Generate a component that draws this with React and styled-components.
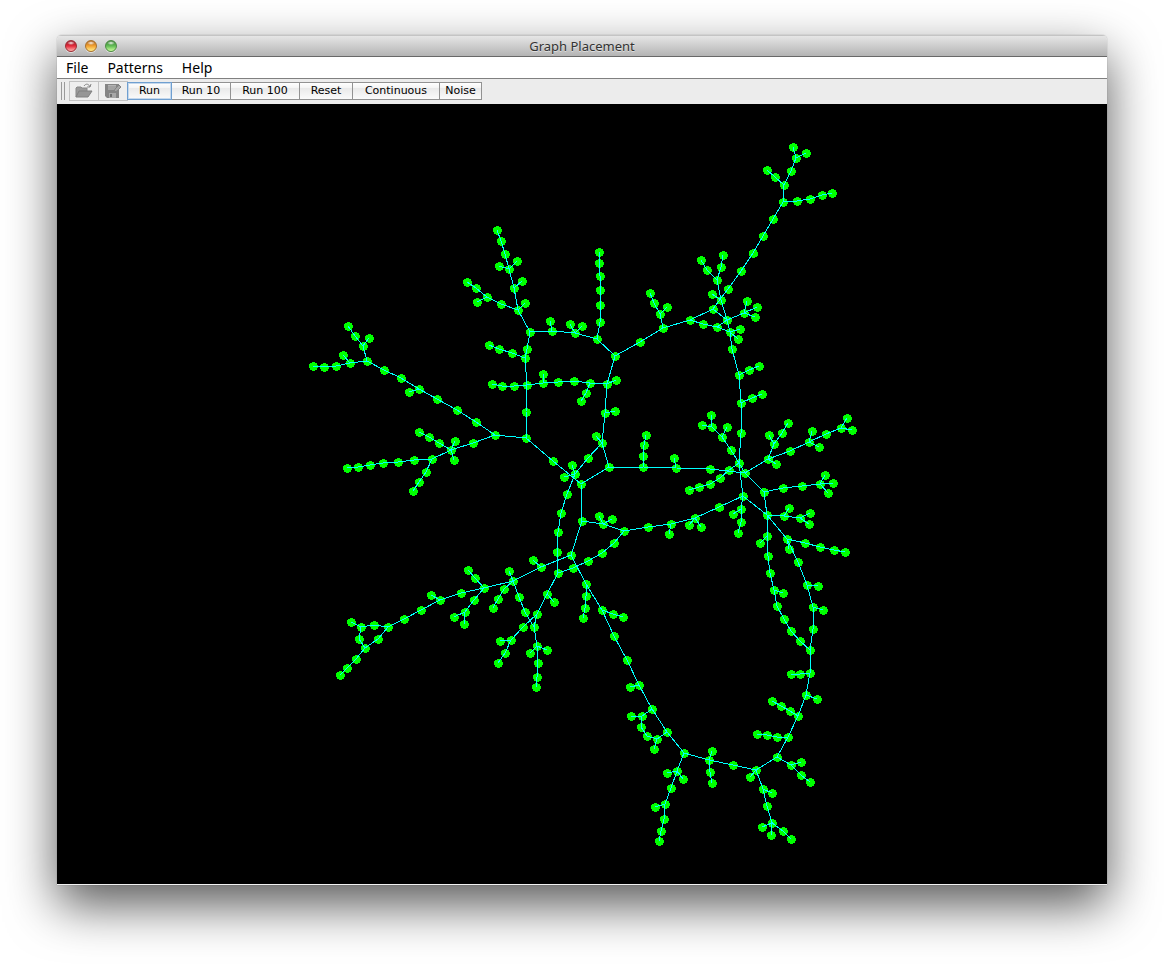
import React from "react";
import styled, { createGlobalStyle } from "styled-components";

const GlobalStyle = createGlobalStyle`
  *, *::before, *::after { box-sizing: border-box; }
  body {
    margin: 0;
    background: #ffffff;
    font-family: "Noto Sans", "Open Sans", sans-serif;
    color: #000000;
  }
`;

const Desktop = styled.main`
  padding: 35px 57px 79px;
`;

const Window = styled.section`
  overflow: hidden;
  border-radius: 5px 5px 0 0;
  background: #ececec;
`;

const WindowShadow = styled.div`
  border-radius: 5px 5px 0 0;
  box-shadow: 0 0 1px rgba(0, 0, 0, 0.5), 0 20px 50px rgba(0, 0, 0, 0.66);
`;

const TitleBar = styled.header`
  display: grid;
  grid-template-columns: 1fr auto 1fr;
  align-items: center;
  height: 22px;
  padding: 0 8px;
  border-top: 1px solid #c4c4c4;
  border-bottom: 1px solid #686868;
  background: linear-gradient(#e6e6e6, #b4b4b4);
`;

const Lights = styled.div`
  display: flex;
  gap: 8px;
`;

const LIGHTS = {
  close: { rim: "#9c2b33", top: "#8e1522", mid: "#e52b3c", low: "#ffb3ae" },
  minimize: { rim: "#a8702a", top: "#a9601c", mid: "#f3a231", low: "#fff08c" },
  zoom: { rim: "#4b8a42", top: "#3c7d36", mid: "#62bd55", low: "#ccff9e" },
};

const Light = styled.button`
  width: 12px;
  height: 12px;
  padding: 0;
  border: 1px solid ${(p) => LIGHTS[p.$kind].rim};
  border-radius: 50%;
  background:
    radial-gradient(ellipse 4px 2px at 50% 20%, rgba(255, 255, 255, 0.9), rgba(255, 255, 255, 0)),
    linear-gradient(
      ${(p) => LIGHTS[p.$kind].top},
      ${(p) => LIGHTS[p.$kind].mid} 50%,
      ${(p) => LIGHTS[p.$kind].low}
    );
  box-shadow: 0 1px 0 rgba(255, 255, 255, 0.5);
`;

const Title = styled.h1`
  margin: 0;
  font-size: 13px;
  line-height: 20px;
  font-weight: 400;
  color: #333333;
  text-shadow: 0 1px 0 rgba(255, 255, 255, 0.5);
`;

const MenuBar = styled.nav`
  display: flex;
  gap: 19px;
  height: 22px;
  padding: 0 9px;
  border-bottom: 1px solid #808080;
  background: #ffffff;
`;

const MenuItem = styled.button`
  padding: 0;
  border: 0;
  background: none;
  font: inherit;
  font-size: 14px;
  line-height: 21px;
  color: inherit;
`;

const ToolBar = styled.div`
  display: flex;
  align-items: center;
  height: 25px;
  padding: 0 0 1px 4px;
  background: #ececec;
`;

const Grip = styled.span`
  width: 4px;
  height: 18px;
  margin-right: 4px;
  border-left: 1px solid #9a9a9a;
  border-right: 1px solid #9a9a9a;
`;

const IconButton = styled.button`
  display: flex;
  align-items: center;
  justify-content: center;
  width: 30px;
  height: 20px;
  margin-right: -1px;
  padding: 0;
  border: 1px solid #c2c2c2;
  background: #eeeeee;
`;

const ToolButton = styled.button`
  width: ${(p) => p.$width}px;
  height: 18px;
  margin-right: -1px;
  padding: 0;
  border: 1px solid ${(p) => (p.$focused ? "#6f9fd0" : "#929292")};
  box-shadow: ${(p) => (p.$focused ? "inset 0 0 0 1px #c5d8ec" : "none")};
  position: relative;
  z-index: ${(p) => (p.$focused ? 1 : 0)};
  background: linear-gradient(#ffffff, #f4f4f4 30%, #e9e9e9 31%, #fafafa);
  font-family: "DejaVu Sans", sans-serif;
  font-size: 11px;
  line-height: 16px;
  color: #000000;
`;

const Canvas = styled.div`
  background: #000000;
  border-bottom: 1px solid #f2f2f2;
`;

const Graph = styled.svg`
  display: block;
  width: 100%;
  height: auto;
`;

const TOOLS = [
  { label: "Run", width: 45, focused: true },
  { label: "Run 10", width: 60 },
  { label: "Run 100", width: 70 },
  { label: "Reset", width: 54 },
  { label: "Continuous", width: 88 },
  { label: "Noise", width: 43 },
];

// Each chain is a run of linked nodes, "x,y x,y ...".
const CHAINS = `
793,147 796,158 791,171 784,185 783,202 773,219 763,236 753,253 741,271 728,289 713,309 690,320 663,328 640,342 615,356
806,153 796,158
767,170 775,177 784,185
783,202 797,201 810,199 822,195 832,193
701,260 707,270 717,280 721,300 727,320 730,332 732,349 739,375 741,403 741,433 739,463 743,496
723,255 721,267 717,280
712,294 721,300
713,309 727,320
727,320 744,313 747,301
757,307 744,313 755,317
690,320 703,324 717,327 730,332
717,327 727,320
740,329 730,332 738,339
739,375 749,370 759,366
741,403 752,398 762,394
650,293 654,303 660,314 663,328
667,307 660,314
497,230 501,241 505,254 509,269 514,288 518,310 530,332 552,331 575,333 597,339 615,356
499,266 509,269 517,261
522,281 514,288
525,303 518,310
467,282 476,288 487,297 501,304 518,310
477,302 487,297
550,321 552,331
570,324 575,333 582,326
599,252 599,263 600,276 600,290 600,305 600,322 597,339
530,332 527,349 525,358 527,385 526,412 526,438
489,345 499,349 512,353 525,358
492,384 502,386 514,386 527,385 543,383 558,382 574,381 590,383 607,384 615,356
543,374 543,383
590,383 586,393 581,401
616,380 607,384 605,413 602,443
605,413 615,411
526,438 495,435 476,422 457,410 437,399 419,389 401,378 384,370 367,361 350,363 336,366 324,367 313,366
343,355 350,363
367,361 363,346 355,336 348,326
369,338 363,346
409,392 419,389
495,435 473,443 451,450 432,459 414,460 398,462 383,463 370,465 358,467 347,468
451,450 439,443 429,437 419,432
455,441 451,450 454,460
432,459 426,472 419,482 413,491
526,438 553,461 581,484 609,467 643,467 676,468 710,469 745,473
739,463 729,470 720,478 710,484 699,487 689,490
596,436 602,443 609,467
602,443 588,458 575,474 567,494 561,513 558,532 557,552 558,573
572,465 575,474 564,477
646,435 644,445 643,456 643,467
674,458 676,468
581,484 582,521 571,555
582,521 603,524 624,531 648,527 671,524 695,518 719,507 743,496
599,516 603,524 612,519
624,531 614,543 602,553 588,561 573,568 558,573
669,534 671,524
689,525 695,518 701,527
571,555 586,584 602,610 614,636 627,660 639,685 652,709 667,732 684,753 709,760 733,765 756,770 777,757 788,737 798,716 806,695 810,673 810,650 813,629 813,607 807,585 798,562 787,539 767,515 743,496
586,584 586,596 585,608 583,618
602,610 613,614 623,617
571,555 541,567 513,581 484,588 461,593 440,600 421,610 404,619 388,627 374,625 361,627 351,622
361,627 359,639 365,648
388,627 378,639 365,648 356,659 347,668 340,675
533,560 541,567
431,595 440,600
468,570 475,578 484,588 474,600 465,612 454,617
465,612 464,624
509,571 513,581 504,589 498,599 493,608
513,581 519,597 525,612 534,627 537,646 538,663 537,677 536,687
530,653 537,646 547,650
558,573 547,594 537,614 523,627 511,640 505,653 498,663
537,614 534,627
500,641 511,640
547,594 554,602
639,685 630,687
652,709 642,716 631,716
642,716 641,727 647,736 657,739 667,732
657,739 654,749
712,751 709,760 710,772 712,783
684,753 677,771 671,788 665,804 664,819 661,831 659,841
667,773 677,771 683,779
655,807 665,804
756,770 750,777
756,770 763,789 767,806 772,823 783,831 791,839
772,793 763,789
762,827 772,823 771,835
777,757 791,765 801,762
791,765 801,775 810,782
788,737 777,737 767,735 757,734
798,716 790,711 781,706 772,701
806,695 817,699
810,673 800,674 791,674
813,607 823,610
807,585 818,586
787,539 789,549
787,539 805,543 820,547 834,550 845,552
764,492 767,515 784,516 800,518 810,513
789,508 784,516
800,518 809,524
767,515 767,536 768,556 770,573 774,590 777,606 784,619 791,631 800,641 810,650
767,536 760,543
774,590 783,593
739,463 745,473 768,459 790,451 809,442 826,434 841,428 852,430
847,418 841,428
812,431 809,442 819,447
776,464 768,459 774,444 782,433 788,423
769,435 774,444
745,473 764,492 783,488 802,486 820,484 825,475
833,483 820,484 828,493
743,496 741,509 741,522 738,533
741,509 733,514
739,463 731,450 722,437 712,427 711,415
702,425 712,427
727,427 722,437
`
  .trim()
  .split("\n");

const NODES = [...new Set(CHAINS.flatMap((chain) => chain.split(" ")))];

function OpenIcon() {
  return (
    <svg width="18" height="16" viewBox="0 0 18 16" aria-hidden="true">
      <path d="M1 14V5l1-1h4l1 1h5v3" fill="#9a9a9a" stroke="#888888" />
      <path d="M1 14 4 8h13l-4 6z" fill="#969696" stroke="#808080" />
      <path d="M9 3c2-3 5-2 6 1M12 4h3l1-3" fill="none" stroke="#858585" />
    </svg>
  );
}

function SaveIcon() {
  return (
    <svg width="18" height="16" viewBox="0 0 18 16" aria-hidden="true">
      <path d="M1 1h14v14H3l-2-2z" fill="#858585" />
      <path d="M4 2h8v5H4z" fill="#b4b4b4" />
      <path d="M4 4h8M4 6h8" stroke="#929292" />
      <path d="M5 10h7v5H5z" fill="#a8a8a8" />
      <path d="M6 11h2v3H6z" fill="#707070" />
      <path d="m10 9 1-3 4-4 2 2-4 4z" fill="#a6a6a6" stroke="#858585" />
    </svg>
  );
}

export default function App() {
  return (
    <>
      <GlobalStyle />
      <Desktop>
        <WindowShadow>
          <Window>
            <TitleBar>
              <Lights>
                <Light type="button" $kind="close" aria-label="Close" />
                <Light type="button" $kind="minimize" aria-label="Minimize" />
                <Light type="button" $kind="zoom" aria-label="Zoom" />
              </Lights>
              <Title>Graph Placement</Title>
            </TitleBar>
            <MenuBar>
              <MenuItem type="button">File</MenuItem>
              <MenuItem type="button">Patterns</MenuItem>
              <MenuItem type="button">Help</MenuItem>
            </MenuBar>
            <ToolBar role="toolbar">
              <Grip />
              <IconButton type="button" aria-label="Open">
                <OpenIcon />
              </IconButton>
              <IconButton type="button" aria-label="Save">
                <SaveIcon />
              </IconButton>
              {TOOLS.map((tool) => (
                <ToolButton key={tool.label} type="button" $width={tool.width} $focused={tool.focused}>
                  {tool.label}
                </ToolButton>
              ))}
            </ToolBar>
            <Canvas>
              <Graph viewBox="57 104 1050 780" role="img" aria-label="Graph" shapeRendering="crispEdges">
                <g fill="#00ff00" transform="translate(0.5 0.5)">
                  {NODES.map((node) => {
                    const [x, y] = node.split(",");
                    return <circle key={node} cx={x} cy={y} r="4.5" />;
                  })}
                </g>
                <g fill="none" stroke="#00ffff">
                  {CHAINS.map((chain) => (
                    <polyline key={chain} points={chain} />
                  ))}
                </g>
              </Graph>
            </Canvas>
          </Window>
        </WindowShadow>
      </Desktop>
    </>
  );
}
